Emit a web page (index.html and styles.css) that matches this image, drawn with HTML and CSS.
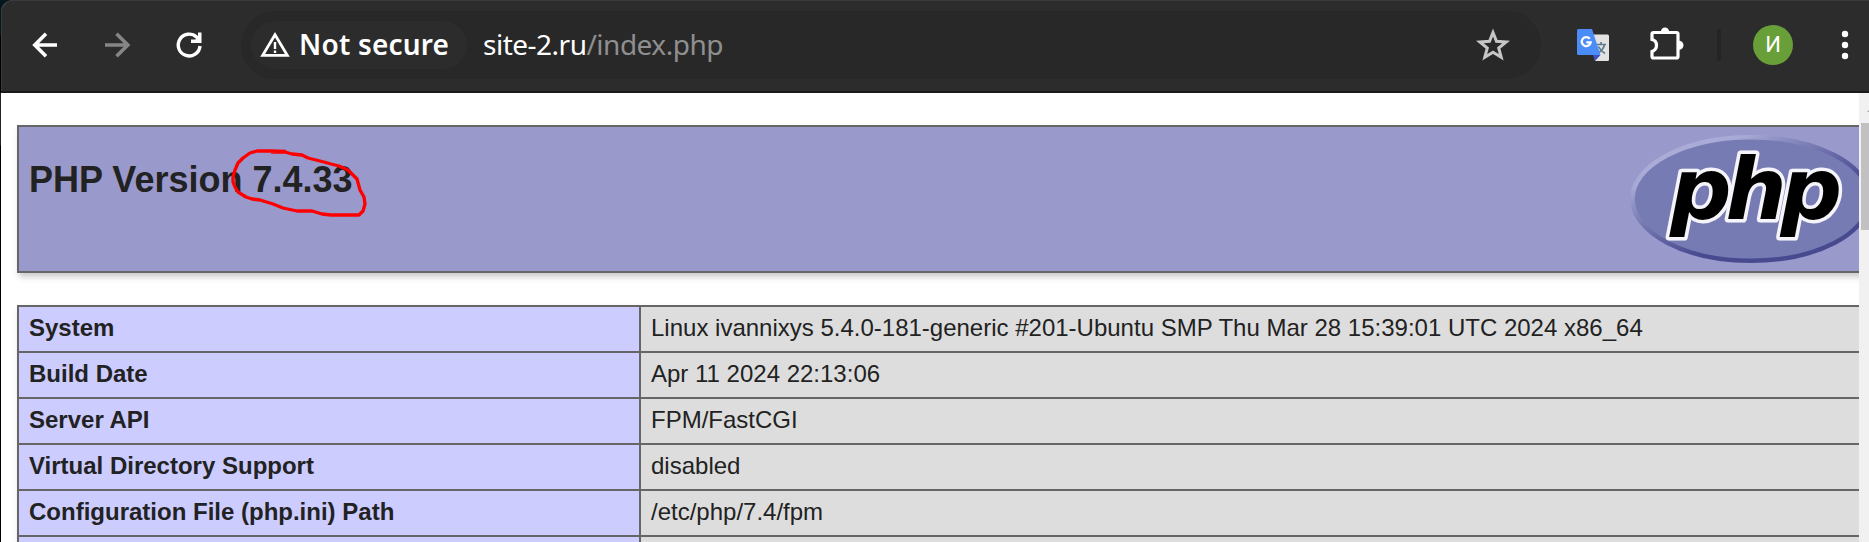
FILE: index.html
```html
<!DOCTYPE html>
<html lang="en">
<head>
<meta charset="utf-8">
<title>phpinfo()</title>
<link rel="stylesheet" href="styles.css">
</head>
<body>
<div class="window">
  <header class="toolbar">
    <svg class="icon nav-back" width="48" height="48" viewBox="0 0 48 48"><path d="M36 24H14.500M25 12.800L13.800 24L25 35.200" fill="none" stroke="#fff" stroke-width="3.600"/></svg>
    <svg class="icon nav-forward" width="48" height="48" viewBox="0 0 48 48"><path d="M12 24H34M23.500 12.800L34.800 24L23.500 35.200" fill="none" stroke="#868686" stroke-width="3.600"/></svg>
    <svg class="icon nav-reload" width="48" height="48" viewBox="0 0 48 48"><path d="M35 25A10.900 10.900 0 1 1 31.500 16L33 17.500" fill="none" stroke="#fff" stroke-width="3.400"/><path d="M26 22V18.500H30.500L33 16V11.500H36.500V22Z" fill="#fff"/></svg>
    <div class="omnibox">
      <div class="chip">
        <svg width="32" height="28" viewBox="0 0 32 28"><path d="M16 3.800L28.300 24.400H3.700Z" fill="none" stroke="#fff" stroke-width="2.800"/><path d="M16 11V18M16 19.500V22" stroke="#fff" stroke-width="2.400"/></svg>
        <span class="chip-label">Not secure</span>
      </div>
      <div class="url"><span class="host">site-2.ru</span><span class="path">/index.php</span></div>
      <svg class="star" width="34" height="34" viewBox="0 0 34 34"><path d="M17 4.500L20.500 13.200L30.200 13.900L22.700 20L25.200 29.200L17 24.200L8.800 29.200L11.300 20L3.800 13.900L13.500 13.200Z" fill="none" stroke="#c6c6c6" stroke-width="3"/></svg>
    </div>
    <svg class="translate" width="32" height="32" viewBox="0 0 32 32">
      <path d="M15 5.500H30.500Q32 5.500 32 7V30.500Q32 32 30.500 32H18Z" fill="#e2e2e2"/>
      <path d="M19 15.500H29M24 13V15.500M27.500 16Q26 21.500 19.500 25M21.500 17.500Q23.500 22 28 24.500" fill="none" stroke="#607d8b" stroke-width="1.700"/>
      <path d="M16 26H23.500L18 32Z" fill="#3f51c1"/>
      <path d="M1.500 0H15L23.500 26H1.500Q0 26 0 24.500V1.500Q0 0 1.500 0Z" fill="#4b8df8"/>
      <path d="M12.800 9.800A4.500 4.500 0 1 0 13.700 13.400H9.300" fill="none" stroke="#fff" stroke-width="2.300"/>
    </svg>
    <svg class="puzzle" width="34" height="34" viewBox="0 0 34 34"><path d="M3.500 4.500H26.500Q28 4.500 28 6V28.500Q28 30 26.500 30H3.500Q2 30 2 28.500V23.500Q6.500 22 6.500 17.300Q6.500 12.500 2 11.500V6Q2 4.500 3.500 4.500Z" fill="none" stroke="#fff" stroke-width="3.200"/><path d="M10.800 4A4.200 4.500 0 0 1 19.200 4ZM29 12.800A4.500 4.500 0 0 1 29 21.800Z" fill="#fff"/></svg>
    <div class="divider"></div>
    <div class="avatar">И</div>
    <svg class="menu" width="8" height="30" viewBox="0 0 8 30"><circle cx="4" cy="4" r="3.200" fill="#fff"/><circle cx="4" cy="15" r="3.200" fill="#fff"/><circle cx="4" cy="26" r="3.200" fill="#fff"/></svg>
  </header>
  <div class="viewport">
    <main class="page">
      <section class="banner">
        <h1>PHP Version 7.4.33</h1>
        <svg class="logo" width="242" height="130" viewBox="0 0 242 130">
          <defs>
            <linearGradient id="rim" x1="0.1" y1="0" x2="0.8" y2="0.8">
              <stop offset="0" stop-color="#aeb0da"/><stop offset="0.22" stop-color="#a8aad6"/><stop offset="0.34" stop-color="#8c8fc2"/><stop offset="0.48" stop-color="#7477b0"/><stop offset="0.65" stop-color="#5a5c9d"/><stop offset="0.8" stop-color="#484a8f"/>
            </linearGradient>
          </defs>
          <ellipse cx="120" cy="64" rx="118.500" ry="61.800" fill="#777bb3" stroke="url(#rim)" stroke-width="4.500"/>
          <text class="logo-text" x="39" y="84" textLength="172" lengthAdjust="spacing">php</text>
        </svg>
        <svg class="scribble" width="140" height="76" viewBox="228 146 140 76"><path d="M286 151.500L270 151H257L250 153L243 158L238 163L235 170L233 177V182L235 187L238 192L246 197L252 199L260 200L273 204L283 208L297 211H312L322 214L331 215H359L363 211L365 204L364 197L360 190L357 179L353 175L348 170L339 166L331 164L324 162L308 158L302 155L292 154L285 152H271" fill="none" stroke="#fe0000" stroke-width="3.300" stroke-linejoin="round"/></svg>
      </section>
      <table class="info">
        <tr><th>System</th><td>Linux ivannixys 5.4.0-181-generic #201-Ubuntu SMP Thu Mar 28 15:39:01 UTC 2024 x86_64</td></tr>
        <tr><th>Build Date</th><td>Apr 11 2024 22:13:06</td></tr>
        <tr><th>Server API</th><td>FPM/FastCGI</td></tr>
        <tr><th>Virtual Directory Support</th><td>disabled</td></tr>
        <tr><th>Configuration File (php.ini) Path</th><td>/etc/php/7.4/fpm</td></tr>
        <tr><th>&nbsp;</th><td>&nbsp;</td></tr>
      </table>
    </main>
    <div class="scrollbar">
      <svg width="10" height="30" viewBox="0 0 10 30"><path d="M8 19L13 14L18 19Z" fill="#a3a3a3"/></svg>
      <div class="thumb"></div>
    </div>
  </div>
</div>
</body>
</html>
```
FILE: styles.css
```css
* { box-sizing: border-box; }
body {
  margin: 0;
  height: 542px;
  overflow: hidden;
  background: linear-gradient(#06161d 0 35px, #000 36px 92px, #222 93px 145px, #000 146px);
  font-family: "Liberation Sans", Arial, sans-serif;
  color: #222;
}
.window { margin-left: 1px; height: 542px; display: flex; flex-direction: column; }
svg { display: block; flex: none; }
.toolbar {
  flex: none;
  height: 93px;
  display: flex;
  align-items: center;
  padding: 0 0 1px 20px;
  background: #2c2c2c;
  border-bottom: 2px solid #18191b;
  border-top-left-radius: 12px;
  box-shadow: inset 1px 1px 0 -0.500px #484848;
}
.nav-forward { margin-left: 24px; }
.nav-reload { margin-left: 24px; }
.omnibox {
  margin-left: 28px;
  width: 1300px;
  height: 68px;
  flex: none;
  display: flex;
  align-items: center;
  padding: 0 31px 0 10px;
  border-radius: 34px;
  background: #282828;
  font-family: "Noto Sans", sans-serif;
  font-size: 28px;
  line-height: 40px;
  white-space: nowrap;
}
.chip {
  width: 216px;
  height: 48px;
  display: flex;
  align-items: center;
  padding-left: 8px;
  border-radius: 24px;
  background: #2c2c2c;
  color: #fff;
}
.chip-label { margin: -2px 0 0 8px; font-weight: 600; letter-spacing: 0.200px; }
.url { margin: -2px 0 0 16px; letter-spacing: -0.500px; }
.host { color: #fff; }
.path { color: #8f8f8f; }
.star { margin-left: auto; }
.translate { margin-left: 36px; }
.puzzle { margin-left: 41px; overflow: visible; }
.divider { flex: none; width: 4px; height: 32px; margin-left: 33px; background: #242424; border-radius: 2px; }
.avatar {
  flex: none;
  width: 40px;
  height: 40px;
  margin-left: 32px;
  border-radius: 50%;
  background: #689f38;
  color: #fff;
  font: 22px/40px Roboto, sans-serif;
  text-align: center;
}
.menu { margin-left: 48px; }
.viewport { flex: 1; min-height: 0; display: flex; background: #fff; }
.page { flex: 1; min-width: 0; overflow: hidden; padding: 32px 0 0 16px; }
.banner {
  position: relative;
  width: 1868px;
  height: 148px;
  display: flex;
  justify-content: space-between;
  padding: 8px 10px;
  border: 2px solid #666;
  background: #99c;
  box-shadow: 2px 4px 6px #ccc;
}
h1 { margin: 24px 0 0; font-size: 36px; line-height: 42px; }
.logo-text {
  font: italic bold 86px "DejaVu Sans", sans-serif;
  fill: #000;
  stroke: #f4f4fa;
  stroke-width: 7px;
  stroke-linejoin: round;
  paint-order: stroke;
}
.scribble { position: absolute; left: 209px; top: 19px; }
.info {
  width: 1868px;
  margin-top: 32px;
  table-layout: fixed;
  border-collapse: collapse;
  box-shadow: 2px 4px 6px #ccc;
  font-size: 24px;
  line-height: 28px;
}
th, td { border: 2px solid #666; padding: 7px 10px 9px; text-align: left; height: 46px; }
th { width: 622px; background: #ccf; }
td { background: #ddd; }
.scrollbar { width: 10px; background: #f1f1f1; }
.thumb { height: 107px; margin-left: 2px; background: #c1c1c1; }
```
